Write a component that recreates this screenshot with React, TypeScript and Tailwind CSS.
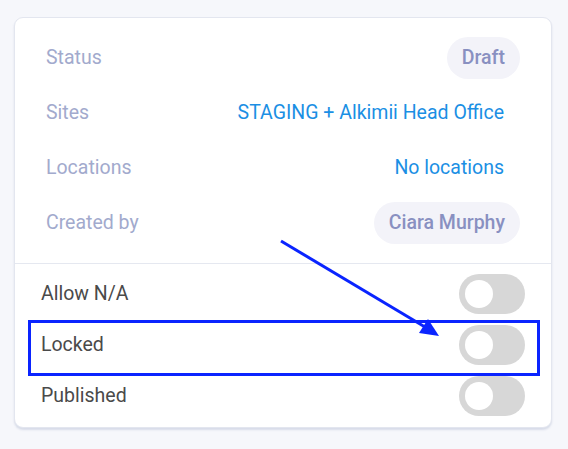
import React from "react";

type Row = { label: string; value: string; kind: "pill" | "link" };

const details: Row[] = [
  { label: "Status", value: "Draft", kind: "pill" },
  { label: "Sites", value: "STAGING + Alkimii Head Office", kind: "link" },
  { label: "Locations", value: "No locations", kind: "link" },
  { label: "Created by", value: "Ciara Murphy", kind: "pill" },
];

const toggles = ["Allow N/A", "Locked", "Published"];

const Toggle = () => (
  <div className="flex h-[40px] w-[66px] items-center rounded-full bg-[#d7d7d7] px-[6px]">
    <div className="h-[28px] w-[28px] rounded-full bg-white" />
  </div>
);

export default function App() {
  return (
    <div
      className="relative h-[449px] w-[568px] bg-[#f6f7fb] pl-[14px] pt-[17px]"
      style={{ fontFamily: "Roboto, 'Liberation Sans', sans-serif" }}
    >
      <div className="w-[538px] rounded-[9px] border border-[#e3e6ef] bg-white shadow-[0_2px_2px_rgba(180,188,210,0.45)]">
        {/* details */}
        <div className="flex flex-col gap-[12px] pb-[19px] pl-[31px] pr-[31px] pt-[18px]">
          {details.map((r) => (
            <div key={r.label} className="flex h-[43px] items-center justify-between">
              <span className="text-[19.5px] text-[#a2aacd]">{r.label}</span>
              {r.kind === "pill" ? (
                <span className="flex h-[42px] items-center rounded-full bg-[#f3f3f9] px-[15px] text-[19.5px] font-medium text-[#8990c1]">
                  {r.value}
                </span>
              ) : (
                <span className="pr-[16px] text-[19.5px] text-[#1b8fe4]">{r.value}</span>
              )}
            </div>
          ))}
        </div>

        <div className="h-px bg-[#e5e8f0]" />

        {/* toggles */}
        <div className="flex flex-col gap-[11px] pb-[11px] pl-[26px] pr-[26px] pt-[10px]">
          {toggles.map((t) => (
            <div key={t} className="flex h-[40px] items-center justify-between">
              <span className="text-[19.5px] text-[#4a4a4a]">{t}</span>
              <Toggle />
            </div>
          ))}
        </div>
      </div>

      {/* annotation overlay */}
      <div className="absolute left-[28px] top-[320px] h-[56px] w-[512px] border-[3px] border-[#0a24ff]" />
      <svg className="absolute left-0 top-0" width="568" height="449" viewBox="0 0 568 449">
        <line x1="281" y1="241" x2="425" y2="327" stroke="#0a24ff" strokeWidth="3" />
        <polygon points="439,336 419,333 428,319" fill="#0a24ff" />
      </svg>
    </div>
  );
}
